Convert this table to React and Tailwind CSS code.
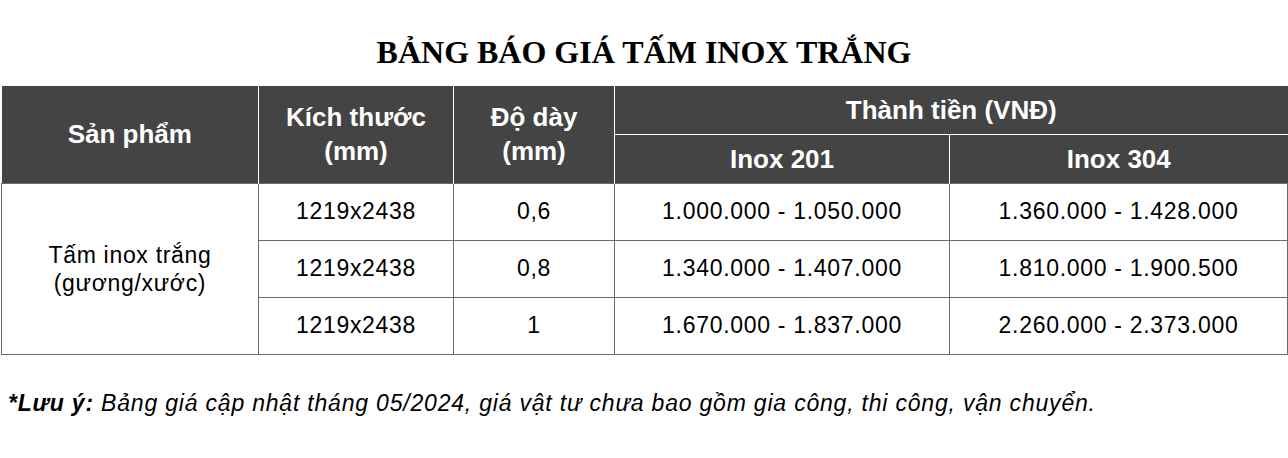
import React from "react";

const rows = [
  ["1219x2438", "0,6", "1.000.000 - 1.050.000", "1.360.000 - 1.428.000"],
  ["1219x2438", "0,8", "1.340.000 - 1.407.000", "1.810.000 - 1.900.500"],
  ["1219x2438", "1", "1.670.000 - 1.837.000", "2.260.000 - 2.373.000"],
];

export default function App() {
  const sans = { fontFamily: '"Liberation Sans", Arial, sans-serif' };
  return (
    <div className="w-[1288px] h-[458px] bg-white" style={sans}>
      <div className="h-[86px] flex items-center justify-center pt-[18px]">
        <h1
          className="text-[32px] leading-[40px] font-bold text-black"
          style={{ fontFamily: '"Liberation Serif", "Times New Roman", serif' }}
        >
          BẢNG BÁO GIÁ TẤM INOX TRẮNG
        </h1>
      </div>
      <div className="ml-[1px] w-[1286px]">
        <table className="w-full border-collapse table-fixed text-center">
          <colgroup>
            <col className="w-[257px]" />
            <col className="w-[195px]" />
            <col className="w-[161px]" />
            <col className="w-[335px]" />
            <col className="w-[338px]" />
          </colgroup>
          <thead className="bg-[#444444] text-white font-bold text-[26px] leading-[34px]">
            <tr className="h-[48px]">
              <th rowSpan={2} className="border-r border-white font-bold">Sản phẩm</th>
              <th rowSpan={2} className="border-r border-white font-bold">Kích thước<br />(mm)</th>
              <th rowSpan={2} className="border-r border-white font-bold">Độ dày<br />(mm)</th>
              <th colSpan={2} className="border-b border-white font-bold">Thành tiền (VNĐ)</th>
            </tr>
            <tr className="h-[49px]">
              <th className="border-r border-white font-bold">Inox 201</th>
              <th className="font-bold">Inox 304</th>
            </tr>
          </thead>
          <tbody className="text-[23px] text-black tracking-[0.7px]">
            {rows.map((r, i) => (
              <tr key={i} className="h-[57px]">
                {i === 0 && (
                  <td rowSpan={3} className="border border-[#6b6b6b] leading-[28px]">
                    Tấm inox trắng<br />(gương/xước)
                  </td>
                )}
                {r.map((c, j) => (
                  <td key={j} className="border border-[#6b6b6b]">{c}</td>
                ))}
              </tr>
            ))}
          </tbody>
        </table>
      </div>
      <p className="mt-[34px] ml-[8px] italic text-[23px] leading-[28px] tracking-[0.8px] text-black">
        <span className="font-bold">*Lưu ý:</span> Bảng giá cập nhật tháng 05/2024, giá vật tư chưa bao gồm gia công, thi công, vận chuyển.
      </p>
    </div>
  );
}
